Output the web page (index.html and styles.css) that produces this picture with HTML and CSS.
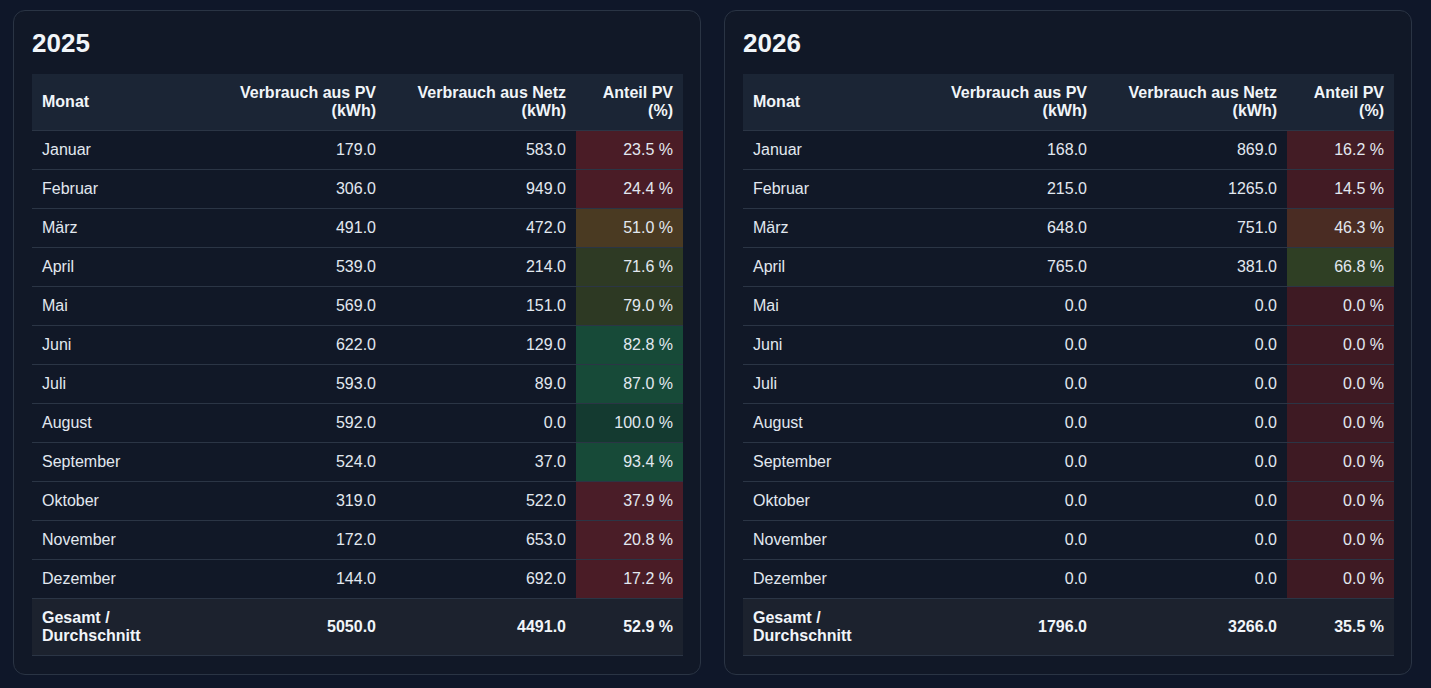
FILE: index.html
```html
<!DOCTYPE html>
<html lang="de">
<head>
<meta charset="utf-8">
<title>PV Verbrauch</title>
<link rel="stylesheet" href="styles.css">
</head>
<body>
<main class="grid">
  <section class="card">
    <h2 class="year">2025</h2>
    <table class="tbl">
      <colgroup><col class="c-month"><col class="c-pv"><col class="c-net"><col class="c-pct"></colgroup>
      <thead>
        <tr><th class="left">Monat</th><th>Verbrauch aus PV<br>(kWh)</th><th>Verbrauch aus Netz<br>(kWh)</th><th>Anteil PV<br>(%)</th></tr>
      </thead>
      <tbody>
        <tr><td class="left">Januar</td><td>179.0</td><td>583.0</td><td class="pct" style="background:#4a1c26">23.5 %</td></tr>
        <tr><td class="left">Februar</td><td>306.0</td><td>949.0</td><td class="pct" style="background:#4a1c26">24.4 %</td></tr>
        <tr><td class="left">März</td><td>491.0</td><td>472.0</td><td class="pct" style="background:#4a3a22">51.0 %</td></tr>
        <tr><td class="left">April</td><td>539.0</td><td>214.0</td><td class="pct" style="background:#2e3a24">71.6 %</td></tr>
        <tr><td class="left">Mai</td><td>569.0</td><td>151.0</td><td class="pct" style="background:#2d3923">79.0 %</td></tr>
        <tr><td class="left">Juni</td><td>622.0</td><td>129.0</td><td class="pct" style="background:#174a38">82.8 %</td></tr>
        <tr><td class="left">Juli</td><td>593.0</td><td>89.0</td><td class="pct" style="background:#174a38">87.0 %</td></tr>
        <tr><td class="left">August</td><td>592.0</td><td>0.0</td><td class="pct" style="background:#143a30">100.0 %</td></tr>
        <tr><td class="left">September</td><td>524.0</td><td>37.0</td><td class="pct" style="background:#174a38">93.4 %</td></tr>
        <tr><td class="left">Oktober</td><td>319.0</td><td>522.0</td><td class="pct" style="background:#4a1d28">37.9 %</td></tr>
        <tr><td class="left">November</td><td>172.0</td><td>653.0</td><td class="pct" style="background:#4a1d27">20.8 %</td></tr>
        <tr><td class="left">Dezember</td><td>144.0</td><td>692.0</td><td class="pct" style="background:#4a1c26">17.2 %</td></tr>
      </tbody>
      <tfoot>
        <tr><td class="left">Gesamt /<br>Durchschnitt</td><td>5050.0</td><td>4491.0</td><td>52.9 %</td></tr>
      </tfoot>
    </table>
  </section>
  <section class="card">
    <h2 class="year">2026</h2>
    <table class="tbl">
      <colgroup><col class="c-month"><col class="c-pv"><col class="c-net"><col class="c-pct"></colgroup>
      <thead>
        <tr><th class="left">Monat</th><th>Verbrauch aus PV<br>(kWh)</th><th>Verbrauch aus Netz<br>(kWh)</th><th>Anteil PV<br>(%)</th></tr>
      </thead>
      <tbody>
        <tr><td class="left">Januar</td><td>168.0</td><td>869.0</td><td class="pct" style="background:#431c25">16.2 %</td></tr>
        <tr><td class="left">Februar</td><td>215.0</td><td>1265.0</td><td class="pct" style="background:#421b24">14.5 %</td></tr>
        <tr><td class="left">März</td><td>648.0</td><td>751.0</td><td class="pct" style="background:#4a2c23">46.3 %</td></tr>
        <tr><td class="left">April</td><td>765.0</td><td>381.0</td><td class="pct" style="background:#2f3f24">66.8 %</td></tr>
        <tr><td class="left">Mai</td><td>0.0</td><td>0.0</td><td class="pct" style="background:#3e1a23">0.0 %</td></tr>
        <tr><td class="left">Juni</td><td>0.0</td><td>0.0</td><td class="pct" style="background:#3e1a23">0.0 %</td></tr>
        <tr><td class="left">Juli</td><td>0.0</td><td>0.0</td><td class="pct" style="background:#3e1a23">0.0 %</td></tr>
        <tr><td class="left">August</td><td>0.0</td><td>0.0</td><td class="pct" style="background:#3e1a23">0.0 %</td></tr>
        <tr><td class="left">September</td><td>0.0</td><td>0.0</td><td class="pct" style="background:#3e1a23">0.0 %</td></tr>
        <tr><td class="left">Oktober</td><td>0.0</td><td>0.0</td><td class="pct" style="background:#3e1a23">0.0 %</td></tr>
        <tr><td class="left">November</td><td>0.0</td><td>0.0</td><td class="pct" style="background:#3e1a23">0.0 %</td></tr>
        <tr><td class="left">Dezember</td><td>0.0</td><td>0.0</td><td class="pct" style="background:#3e1a23">0.0 %</td></tr>
      </tbody>
      <tfoot>
        <tr><td class="left">Gesamt /<br>Durchschnitt</td><td>1796.0</td><td>3266.0</td><td>35.5 %</td></tr>
      </tfoot>
    </table>
  </section>
</main>
</body>
</html>
```

FILE: styles.css
```css
html, body {
  margin: 0;
  padding: 0;
  background: #0f1729;
  font-family: "Liberation Sans", Arial, sans-serif;
  color: #e5e7eb;
}

.grid {
  display: grid;
  grid-template-columns: 688px 688px;
  column-gap: 23px;
  padding: 10px 0 0 13px;
  align-items: start;
}

.card {
  box-sizing: border-box;
  background: #111827;
  border: 1px solid #2a3444;
  border-radius: 12px;
  padding: 18px 17px 18px 18px;
}

.year {
  margin: 0 0 17px 0;
  font-size: 26px;
  line-height: 28px;
  font-weight: 700;
  color: #f1f5f9;
}

.tbl {
  width: 651px;
  border-collapse: collapse;
  table-layout: fixed;
  font-size: 16px;
  line-height: 18px;
}

.c-month { width: 164px; }
.c-pv { width: 190px; }
.c-net { width: 190px; }
.c-pct { width: 107px; }

.tbl th,
.tbl td {
  padding: 10px 10px 10px 10px;
  text-align: right;
  vertical-align: middle;
  border-bottom: 1px solid #2b3545;
}

.tbl .left {
  text-align: left;
}

.tbl thead th {
  background: #1b2535;
  font-weight: 700;
  color: #f1f5f9;
}

.tbl tbody td {
  color: #e2e8f0;
}

.tbl tfoot td {
  background: #1c222e;
  font-weight: 700;
  color: #f1f5f9;
}
```
